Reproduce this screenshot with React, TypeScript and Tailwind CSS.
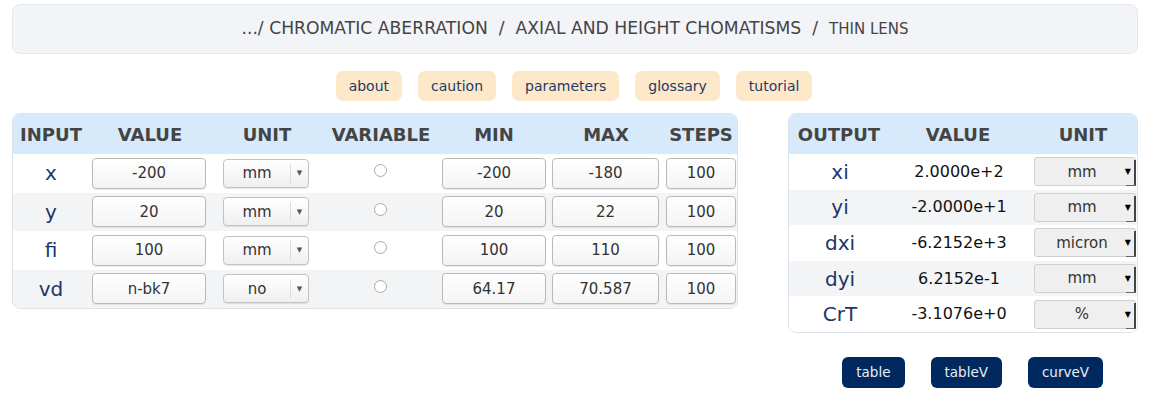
import React from "react";

const font = { fontFamily: '"DejaVu Sans", "Liberation Sans", sans-serif' };

const inputRows = [
  { name: "x", value: "-200", unit: "mm", min: "-200", max: "-180", steps: "100" },
  { name: "y", value: "20", unit: "mm", min: "20", max: "22", steps: "100" },
  { name: "fi", value: "100", unit: "mm", min: "100", max: "110", steps: "100" },
  { name: "vd", value: "n-bk7", unit: "no", min: "64.17", max: "70.587", steps: "100" },
];

const outputRows = [
  { name: "xi", value: "2.0000e+2", unit: "mm" },
  { name: "yi", value: "-2.0000e+1", unit: "mm" },
  { name: "dxi", value: "-6.2152e+3", unit: "micron" },
  { name: "dyi", value: "6.2152e-1", unit: "mm" },
  { name: "CrT", value: "-3.1076e+0", unit: "%" },
];

function Box({ text, w }: { text: string; w: string }) {
  return (
    <div
      className={`${w} h-[31px] flex items-center justify-center rounded-[4px] border border-[#b9b9b9] bg-gradient-to-b from-white to-[#f4f4f4] text-[15px] text-[#333] shadow-[0_1px_1px_rgba(0,0,0,0.08)]`}
    >
      {text}
    </div>
  );
}

function InSelect({ text }: { text: string }) {
  return (
    <div className="w-[86px] h-[29px] flex items-center rounded-[4px] border border-[#c3c3c3] bg-gradient-to-b from-white to-[#efefef] text-[15px] text-[#333] shadow-[0_1px_1px_rgba(0,0,0,0.1)]">
      <div className="flex-1 text-center">{text}</div>
      <div className="w-px h-[19px] bg-[#dcdcdc]" />
      <div className="w-[17px] flex justify-center text-[7px] text-[#555]">▼</div>
    </div>
  );
}

function OutSelect({ text }: { text: string }) {
  return (
    <div className="relative w-[102px] h-[29px] flex items-center rounded-[3px] border border-[#cfcfcf] bg-[#efefef] text-[15px] text-[#333]">
      <div className="flex-1 text-center pr-[6px]">{text}</div>
      <div className="absolute right-[4px] top-[10px] text-[8px] leading-none text-black">▼</div>
      <div className="absolute right-[-1px] top-[2px] bottom-[-1px] w-[2px] bg-[#444] rounded-b-[2px]" />
      <div className="absolute right-[-1px] bottom-[-1px] w-[10px] h-[1px] bg-[#666]" />
    </div>
  );
}

export default function App() {
  return (
    <div className="w-[1150px] h-[410px] bg-white overflow-hidden" style={font}>
      <div className="px-[12px] pt-[4px]">
        <div className="h-[50px] rounded-[8px] border border-[#e3e7ee] bg-[#f3f4f8] flex items-center justify-center text-[#444] gap-[11px]">
          <span className="text-[17.2px]">.../ CHROMATIC ABERRATION</span>
          <span className="text-[17.2px]">/</span>
          <span className="text-[17.2px]">AXIAL AND HEIGHT CHOMATISMS</span>
          <span className="text-[17.2px]">/</span>
          <span className="text-[15px]">THIN LENS</span>
        </div>
      </div>

      <div className="flex justify-center gap-[16px] mt-[17px] pr-[2px]">
        {["about", "caution", "parameters", "glossary", "tutorial"].map((b) => (
          <div
            key={b}
            className="h-[30px] px-[13px] flex items-center rounded-[7px] bg-[#fde8c9] text-[14px] text-[#1e3a68]"
          >
            {b}
          </div>
        ))}
      </div>

      <div className="flex items-start mt-[12px] px-[12px] gap-[50px]">
        <div className="w-[728px] rounded-[8px] border border-[#dde3ea] overflow-hidden">
          <div className="grid grid-cols-[76px_122px_112px_116px_110px_114px_78px] h-[40px] items-center bg-[#d7eafc] text-[18px] font-bold text-[#444] text-center">
            <div>INPUT</div>
            <div>VALUE</div>
            <div>UNIT</div>
            <div>VARIABLE</div>
            <div>MIN</div>
            <div>MAX</div>
            <div className="pr-[2px]">STEPS</div>
          </div>
          {inputRows.map((r, i) => (
            <div
              key={r.name}
              className={`grid grid-cols-[76px_122px_112px_116px_110px_114px_78px] h-[38.5px] items-center ${i % 2 === 1 ? "bg-[#f3f4f6]" : "bg-white"}`}
            >
              <div className="text-center text-[20px] text-[#1b3768]">{r.name}</div>
              <div className="flex justify-start pl-[3px]">
                <Box text={r.value} w="w-[114px]" />
              </div>
              <div className="flex justify-start pl-[12px]">
                <InSelect text={r.unit} />
              </div>
              <div className="flex justify-center pb-[5px] pr-[1px]">
                <div className="w-[13px] h-[13px] rounded-full border border-[#a9a9a9] bg-white" />
              </div>
              <div className="flex justify-start pl-[3px]">
                <Box text={r.min} w="w-[104px]" />
              </div>
              <div className="flex justify-start pl-[3px]">
                <Box text={r.max} w="w-[107px]" />
              </div>
              <div className="flex justify-start pl-[3px]">
                <Box text={r.steps} w="w-[70px]" />
              </div>
            </div>
          ))}
        </div>

        <div className="flex flex-col items-end">
          <div className="w-[350px] rounded-[8px] border border-[#dde3ea] overflow-hidden">
            <div className="grid grid-cols-[100px_138px_112px] h-[40px] items-center bg-[#d7eafc] text-[18px] font-bold text-[#444] text-center">
              <div>OUTPUT</div>
              <div>VALUE</div>
              <div>UNIT</div>
            </div>
            {outputRows.map((r, i) => (
              <div
                key={r.name}
                className={`grid grid-cols-[100px_138px_112px] h-[35.6px] items-center ${i % 2 === 1 ? "bg-[#f3f4f6]" : "bg-white"}`}
              >
                <div className="text-center text-[20px] text-[#1b3768] pl-[2px]">{r.name}</div>
                <div className="text-center text-[16px] text-[#111] pl-[2px]">{r.value}</div>
                <div className="flex justify-start pl-[7px]">
                  <OutSelect text={r.unit} />
                </div>
              </div>
            ))}
          </div>
          <div className="flex gap-[26px] mt-[24px] mr-[35px]">
            {["table", "tableV", "curveV"].map((b) => (
              <div
                key={b}
                className="h-[31px] px-[14px] flex items-center rounded-[6px] bg-[#002a5f] text-[13.5px] text-[#e8eef7]"
              >
                {b}
              </div>
            ))}
          </div>
        </div>
      </div>
    </div>
  );
}
